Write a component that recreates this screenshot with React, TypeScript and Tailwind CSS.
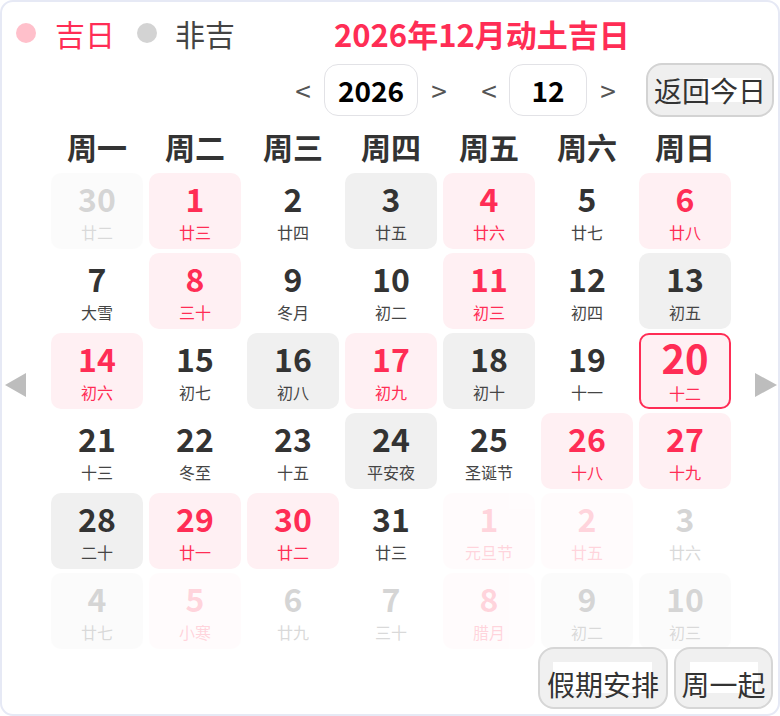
import React from "react";

type Cell = { d: number; l: string; bg: "p" | "g" | "n"; faded?: boolean; today?: boolean };

const cells: Cell[] = [
  { d: 30, l: "廿二", bg: "g", faded: true },
  { d: 1, l: "廿三", bg: "p" },
  { d: 2, l: "廿四", bg: "n" },
  { d: 3, l: "廿五", bg: "g" },
  { d: 4, l: "廿六", bg: "p" },
  { d: 5, l: "廿七", bg: "n" },
  { d: 6, l: "廿八", bg: "p" },
  { d: 7, l: "大雪", bg: "n" },
  { d: 8, l: "三十", bg: "p" },
  { d: 9, l: "冬月", bg: "n" },
  { d: 10, l: "初二", bg: "n" },
  { d: 11, l: "初三", bg: "p" },
  { d: 12, l: "初四", bg: "n" },
  { d: 13, l: "初五", bg: "g" },
  { d: 14, l: "初六", bg: "p" },
  { d: 15, l: "初七", bg: "n" },
  { d: 16, l: "初八", bg: "g" },
  { d: 17, l: "初九", bg: "p" },
  { d: 18, l: "初十", bg: "g" },
  { d: 19, l: "十一", bg: "n" },
  { d: 20, l: "十二", bg: "p", today: true },
  { d: 21, l: "十三", bg: "n" },
  { d: 22, l: "冬至", bg: "n" },
  { d: 23, l: "十五", bg: "n" },
  { d: 24, l: "平安夜", bg: "g" },
  { d: 25, l: "圣诞节", bg: "n" },
  { d: 26, l: "十八", bg: "p" },
  { d: 27, l: "十九", bg: "p" },
  { d: 28, l: "二十", bg: "g" },
  { d: 29, l: "廿一", bg: "p" },
  { d: 30, l: "廿二", bg: "p" },
  { d: 31, l: "廿三", bg: "n" },
  { d: 1, l: "元旦节", bg: "p", faded: true },
  { d: 2, l: "廿五", bg: "p", faded: true },
  { d: 3, l: "廿六", bg: "n", faded: true },
  { d: 4, l: "廿七", bg: "g", faded: true },
  { d: 5, l: "小寒", bg: "p", faded: true },
  { d: 6, l: "廿九", bg: "n", faded: true },
  { d: 7, l: "三十", bg: "n", faded: true },
  { d: 8, l: "腊月", bg: "p", faded: true },
  { d: 9, l: "初二", bg: "g", faded: true },
  { d: 10, l: "初三", bg: "g", faded: true },
];

const weekdays = ["周一", "周二", "周三", "周四", "周五", "周六", "周日"];

function DayCell({ c }: { c: Cell }) {
  const red = c.bg === "p";
  const bg = red ? "bg-[#fff0f3]" : c.bg === "g" ? "bg-[#f0f0f0]" : "";
  const border = c.today ? "border-2 border-[#ff2d55]" : "";
  return (
    <div
      className={`flex h-[76px] flex-col items-center rounded-[10px] ${bg} ${border} ${c.faded ? "opacity-20" : ""}`}
    >
      {c.today ? (
        <span className="mt-[4px] h-[36px] text-[40px] leading-[36px] font-bold text-[#ff2d55]">{c.d}</span>
      ) : (
        <span className={`mt-[9px] h-[32px] text-[32px] leading-[32px] font-bold ${red ? "text-[#ff2d55]" : "text-[#333333]"}`}>
          {c.d}
        </span>
      )}
      <span
        className={`mt-[10px] text-[16px] leading-[16px] ${red ? "text-[#ff2d55]" : "text-[#454545]"}`}
      >
        {c.l}
      </span>
    </div>
  );
}

export default function App() {
  return (
    <div
      className="relative h-[716px] w-[780px] overflow-hidden rounded-[13px] border-2 border-[#e6e9f5] bg-white"
      style={{ fontFamily: '"Noto Sans CJK SC", "Noto Sans", sans-serif' }}
    >
      {/* Row 1: legend + title */}
      <div className="flex h-[62px] items-center">
        <span className="ml-[14px] h-[20px] w-[20px] rounded-full bg-[#ffc0cb]" />
        <span className="ml-[19px] text-[30px] leading-[30px] text-[#ff2d55]">吉日</span>
        <span className="ml-[22px] h-[20px] w-[20px] rounded-full bg-[#d3d3d3]" />
        <span className="ml-[18px] text-[30px] leading-[30px] text-[#444444]">非吉</span>
        <span className="ml-[99px] text-[31px] leading-[31px] font-bold text-[#ff2d55]">2026年12月动土吉日</span>
      </div>

      {/* Row 2: year/month controls */}
      <div className="flex h-[52px] items-center justify-end pr-[4px]">
        <span className="w-[28px] text-center text-[28px] leading-[28px] text-[#555555]">&lt;</span>
        <div className="ml-[7px] flex h-[52px] w-[94px] items-center justify-center rounded-[14px] border-[1.5px] border-[#e2e2e6] bg-white">
          <span className="text-[28px] leading-[28px] font-bold text-black">2026</span>
        </div>
        <span className="ml-[7px] w-[28px] text-center text-[28px] leading-[28px] text-[#555555]">&gt;</span>
        <span className="ml-[22px] w-[28px] text-center text-[28px] leading-[28px] text-[#555555]">&lt;</span>
        <div className="ml-[6px] flex h-[52px] w-[78px] items-center justify-center rounded-[14px] border-[1.5px] border-[#e2e2e6] bg-white">
          <span className="text-[28px] leading-[28px] font-bold text-black">12</span>
        </div>
        <span className="ml-[7px] w-[28px] text-center text-[28px] leading-[28px] text-[#555555]">&gt;</span>
        <div className="relative ml-[24px] h-[54px] w-[128px] rounded-[16px] border-2 border-[#d3d3d3] bg-[#efefef]">
          <div className="absolute left-[55px] top-[13px] h-[24px] w-[58px] bg-white" />
          <div className="relative flex h-full items-center justify-center">
            <span className="text-[28px] leading-[28px] text-[#333333]">返回今日</span>
          </div>
        </div>
      </div>

      {/* Weekday header */}
      <div className="flex h-[57px] pl-[49px] pt-[15px]">
        <div className="grid w-[680px] grid-cols-7 gap-x-[6px]">
          {weekdays.map((w) => (
            <div key={w} className="text-center text-[30px] leading-[30px] font-bold text-[#333333]">
              {w}
            </div>
          ))}
        </div>
      </div>

      {/* Grid with arrows */}
      <div className="flex items-start">
        <div className="w-[49px] pl-[3px] pt-[200px]">
          <svg width="21" height="24" viewBox="0 0 21 24">
            <polygon points="21,0 21,24 0,12" fill="#bdbdbd" />
          </svg>
        </div>
        <div className="grid w-[680px] grid-cols-7 gap-x-[6px] gap-y-[4px]">
          {cells.map((c, i) => (
            <DayCell key={i} c={c} />
          ))}
        </div>
        <div className="pl-[24px] pt-[200px]">
          <svg width="22" height="24" viewBox="0 0 22 24">
            <polygon points="0,0 0,24 22,12" fill="#bdbdbd" />
          </svg>
        </div>
      </div>

      {/* Bottom buttons */}
      <div className="-mt-[2px] flex justify-end gap-[6px] pr-[5px]">
        <div className="relative h-[62px] w-[130px] rounded-[16px] border-2 border-[#d6d6d6] bg-[#f0f0f0]">
          <div className="absolute left-[13px] top-[13px] h-[31px] w-[99px] bg-white" />
          <div className="relative flex h-full items-center justify-center pt-[12px]">
            <span className="text-[28px] leading-[28px] text-[#333333]">假期安排</span>
          </div>
        </div>
        <div className="relative h-[62px] w-[99px] rounded-[16px] border-2 border-[#d6d6d6] bg-[#f0f0f0]">
          <div className="absolute left-[14px] top-[13px] h-[31px] w-[68px] bg-white" />
          <div className="relative flex h-full items-center justify-center pt-[12px]">
            <span className="text-[28px] leading-[28px] text-[#333333]">周一起</span>
          </div>
        </div>
      </div>
    </div>
  );
}
